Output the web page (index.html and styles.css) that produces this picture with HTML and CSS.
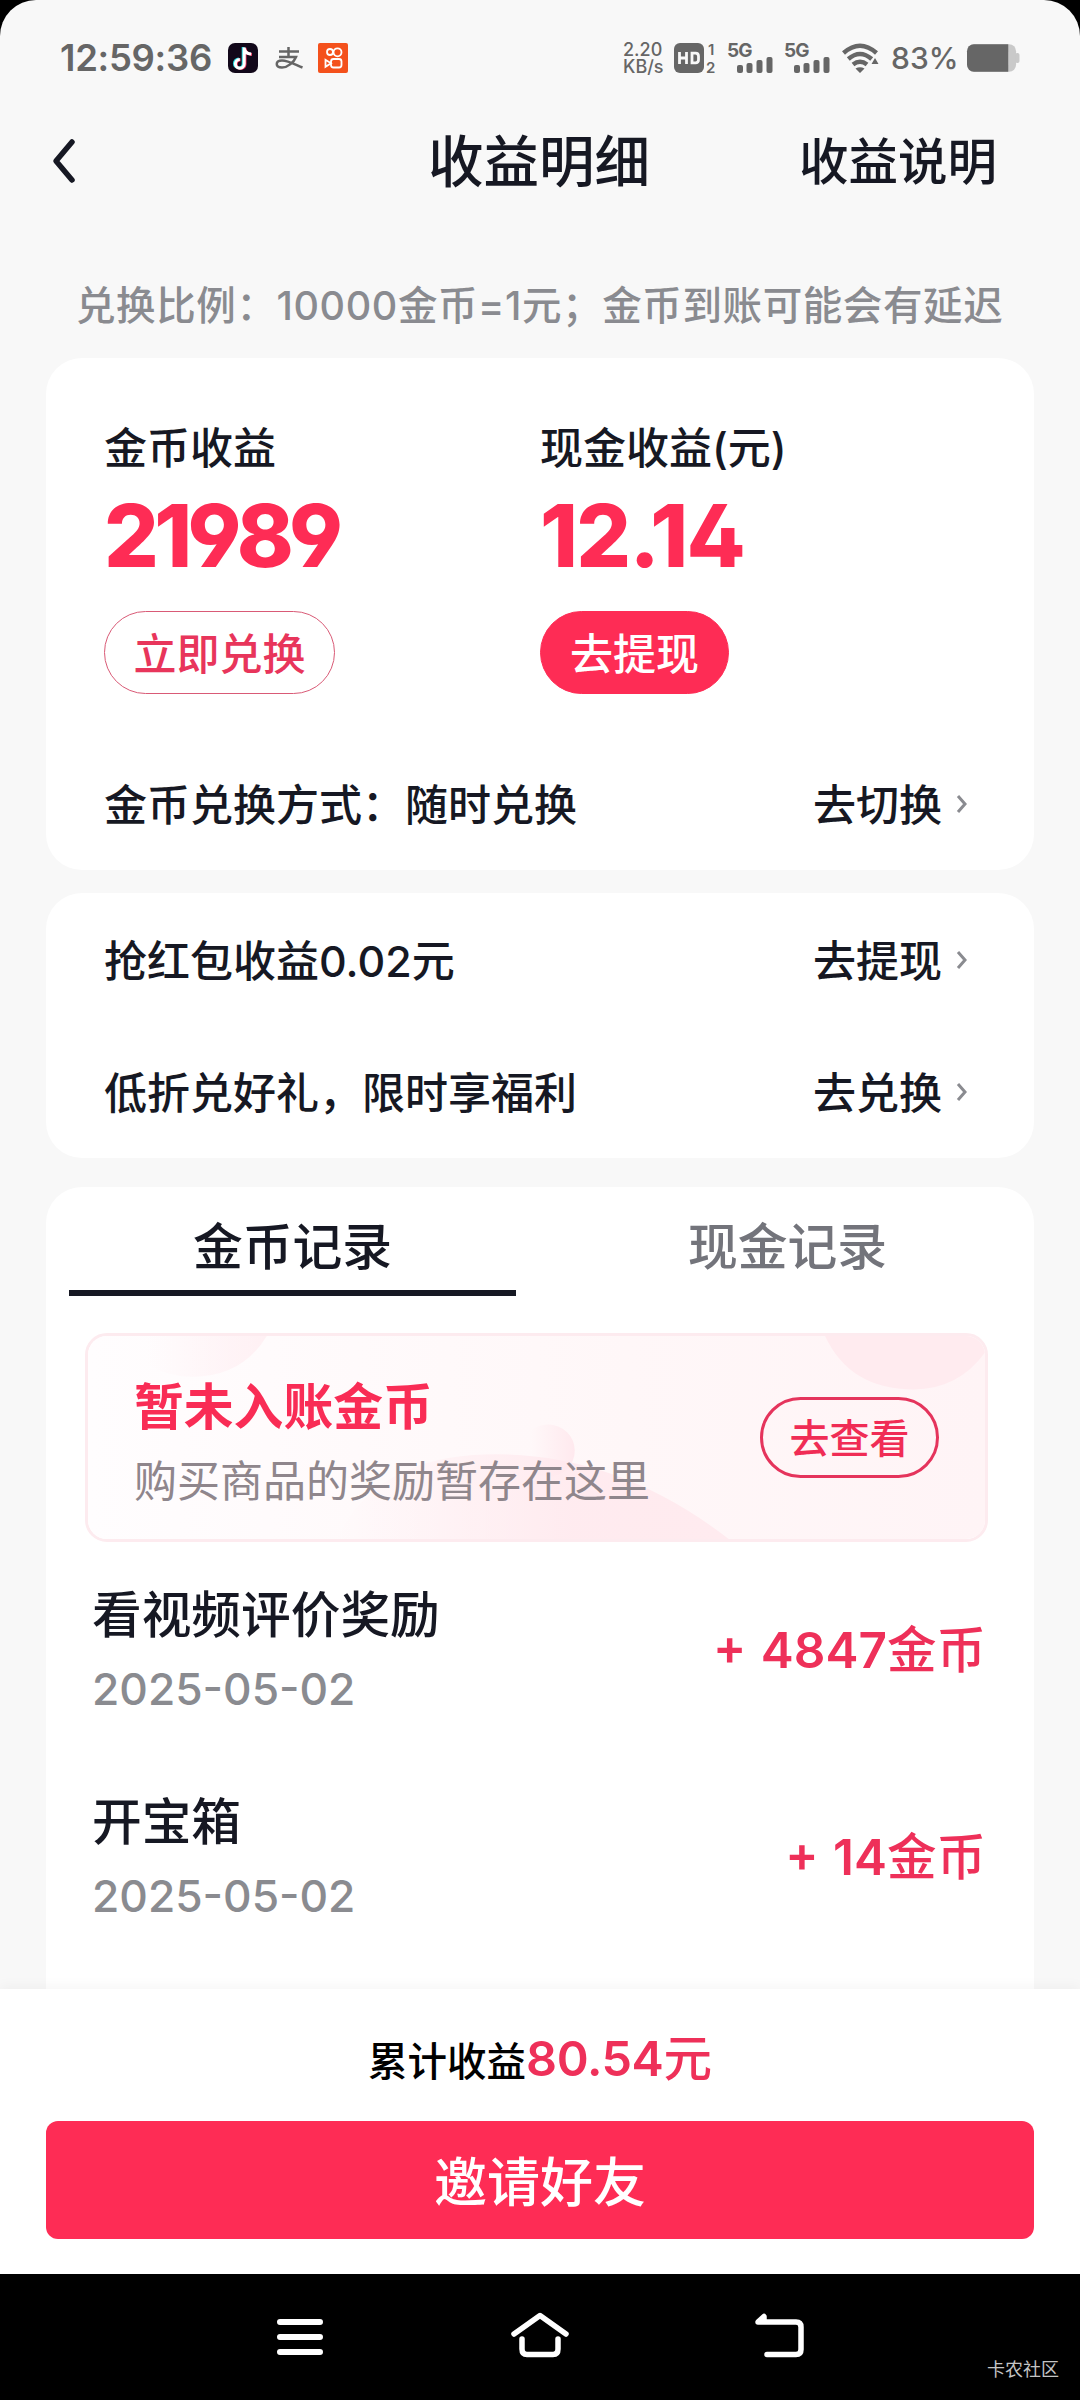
FILE: index.html
```html
<!DOCTYPE html>
<html lang="zh-CN">
<head>
<meta charset="utf-8">
<title>收益明细</title>
<link rel="stylesheet" href="styles.css">
</head>
<body>
<div class="screen">
  <div class="statusbar">
    <span class="clock">12:59:36</span>
    <svg class="app-icon" viewBox="0 0 30 30">
      <rect width="30" height="30" rx="7" fill="#12081a"/>
      <g fill="none" stroke-width="3">
        <path d="M15.200 4v16.400a4.400 4.400 0 1 1-4.400-4.400M15.200 5c.7 3.500 3 5.500 7 5.700" stroke="#25d9e0"/>
        <path d="M17 4.800v16.400a4.400 4.400 0 1 1-4.400-4.400M17 5.800c.7 3.500 3 5.500 7 5.700" stroke="#f0335f"/>
        <path d="M16.200 4.400v16.400a4.400 4.400 0 1 1-4.400-4.400M16.200 5.400c.7 3.500 3 5.500 7 5.700" stroke="#fff"/>
      </g>
    </svg>
    <svg class="pay-icon" viewBox="0 0 28 22" fill="none" stroke="#666" stroke-width="2.500">
      <path d="M4 4.500h20M13.500 0v9.500M4 10h17c-2 5-8 10.500-14 10.500-7 0-7-7 0-7 6 0 13 4 20.500 7"/>
    </svg>
    <svg class="app-icon" viewBox="0 0 30 30">
      <rect width="30" height="30" rx="2" fill="#f4511c"/>
      <g fill="none" stroke="#fff" stroke-width="1.800">
        <circle cx="12" cy="9" r="3"/><circle cx="19.500" cy="9.300" r="4"/>
        <rect x="13" y="16" width="10.500" height="8.500" rx="2.500"/><path d="M13 20.300l-5.500-3.500v7z"/>
      </g>
    </svg>
    <div class="status-right">
      <div class="speed"><span>2.20</span><span>KB/s</span></div>
      <svg class="hd" viewBox="0 0 43 30" fill="#666">
        <rect width="30" height="30" rx="6"/>
        <path d="M5.500 9v12M12.500 9v12M5.500 15h7M18 10.200h3.500q3 0 3 3v3.600q0 3-3 3H18z" fill="none" stroke="#f8f8f8" stroke-width="2.800"/>
        <text x="34" y="11.500" class="tiny">1</text><text x="32" y="30" class="tiny">2</text>
      </svg>
      <svg class="signal" viewBox="0 0 45 30" fill="#666">
        <text x="-1" y="14" class="net">5G</text>
        <rect x="9" y="22" width="6" height="8" rx="2"/><rect x="18.500" y="20" width="6" height="10" rx="2"/><rect x="28.500" y="17" width="6" height="13" rx="2"/><rect x="38.500" y="14" width="6" height="16" rx="2"/>
      </svg>
      <svg class="signal second" viewBox="0 0 45 30" fill="#666">
        <text x="-1" y="14" class="net">5G</text>
        <rect x="9" y="22" width="6" height="8" rx="2"/><rect x="18.500" y="20" width="6" height="10" rx="2"/><rect x="28.500" y="17" width="6" height="13" rx="2"/><rect x="38.500" y="14" width="6" height="16" rx="2"/>
      </svg>
      <svg class="wifi" viewBox="0 0 37 30" fill="none" stroke="#666" stroke-width="4.500">
        <path d="M1.500 10Q18 -4.500 34.500 10M6.300 16Q18 6 29.700 16M11 21.500Q18 16 25 21.500"/>
        <path d="M13.500 25.500q4.500-2.500 9 0L18 30zM29.500 21h7l-3.500-6z" fill="#666" stroke="none"/>
      </svg>
      <span class="percent">83%</span>
      <svg class="battery" viewBox="0 0 54 28">
        <rect width="50" height="28" rx="7" fill="#c9c9c9"/><rect x="49" y="9" width="4.500" height="10" rx="2" fill="#c9c9c9"/>
        <path d="M7 0h35v28H7a7 7 0 0 1-7-7V7a7 7 0 0 1 7-7z" fill="#666"/>
      </svg>
    </div>
  </div>

  <header class="navbar">
    <svg class="back" viewBox="0 0 24 48" fill="none" stroke="#161823" stroke-width="5.500" stroke-linecap="round" stroke-linejoin="round"><path d="M20 4L4 23l16 19"/></svg>
    <h1 class="title">收益明细</h1>
    <span class="help">收益说明</span>
  </header>

  <p class="notice">兑换比例：10000金币=1元；金币到账可能会有延迟</p>

  <section class="card income">
    <div class="totals">
      <div class="total"><span class="label">金币收益</span><strong class="amount coins">21989</strong><span class="pill">立即兑换</span></div>
      <div class="total"><span class="label">现金收益(元)</span><strong class="amount">12.14</strong><span class="pill filled">去提现</span></div>
    </div>
    <div class="row"><span>金币兑换方式：随时兑换</span><span class="link">去切换<svg class="chevron" viewBox="0 0 12 20"><path d="M2 2l7 8-7 8"/></svg></span></div>
  </section>

  <section class="card extras">
    <div class="row"><span>抢红包收益0.02元</span><span class="link">去提现<svg class="chevron" viewBox="0 0 12 20"><path d="M2 2l7 8-7 8"/></svg></span></div>
    <div class="row"><span>低折兑好礼，限时享福利</span><span class="link">去兑换<svg class="chevron" viewBox="0 0 12 20"><path d="M2 2l7 8-7 8"/></svg></span></div>
  </section>

  <section class="card records">
    <div class="tabs"><span class="tab active">金币记录</span><span class="tab">现金记录</span></div>
    <div class="banner">
      <svg class="banner-art" viewBox="0 0 903 209" preserveAspectRatio="none">
        <defs>
          <linearGradient id="base"><stop offset="0" stop-color="#fffdfe"/><stop offset=".6" stop-color="#fff7f8"/><stop offset="1" stop-color="#fff4f6"/></linearGradient>
          <linearGradient id="hill"><stop offset="0" stop-color="#ffe8ed" stop-opacity="0"/><stop offset=".6" stop-color="#ffe8ed" stop-opacity=".8"/><stop offset="1" stop-color="#ffebef"/></linearGradient>
          <linearGradient id="ball"><stop offset=".2" stop-color="#ffe9ee" stop-opacity="0"/><stop offset="1" stop-color="#ffe9ee"/></linearGradient>
        </defs>
        <rect width="903" height="209" fill="url(#base)"/>
        <path d="M30 0q30 42 75 42 50 0 75-42z" fill="url(#ball)" opacity=".6"/>
        <circle cx="463" cy="118" r="27" fill="url(#ball)"/>
        <path d="M250 209Q290 125 400 122 530 118 645 209z" fill="url(#hill)"/>
        <path d="M742 0q25 55 89 55 45 0 72-38V0z" fill="#ffebef"/>
      </svg>
      <div class="banner-text"><strong>暂未入账金币</strong><span>购买商品的奖励暂存在这里</span></div>
      <span class="banner-btn">去查看</span>
    </div>
    <div class="record"><div class="what"><span class="name">看视频评价奖励</span><span class="date">2025-05-02</span></div><span class="gain"><b>+ 4847</b>金币</span></div>
    <div class="record"><div class="what"><span class="name">开宝箱</span><span class="date">2025-05-02</span></div><span class="gain"><b>+ 14</b>金币</span></div>
  </section>

  <footer class="footer">
    <div class="sum">累计收益<span><b>80.54</b>元</span></div>
    <div class="invite">邀请好友</div>
  </footer>
</div>

<nav class="sysnav">
  <svg viewBox="0 0 60 48" stroke="#fff" stroke-width="6" stroke-linecap="round" fill="none"><path d="M10 12h40M10 27h40M10 42h40"/></svg>
  <svg viewBox="0 0 60 48" stroke="#fff" stroke-width="5.500" stroke-linecap="round" stroke-linejoin="round" fill="none"><path d="M4 24L30 5.500 56 24M12 29v10q0 5.500 5 5.500h26q5 0 5-5.500V29"/></svg>
  <svg viewBox="0 0 60 48" stroke="#fff" stroke-width="5.500" stroke-linecap="round" stroke-linejoin="round" fill="none"><path d="M17 44.500h29q5 0 5-5V17q0-5-5-5H8l6-5.500V12"/></svg>
  <span class="watermark">卡农社区</span>
</nav>
</body>
</html>
```
FILE: styles.css
```css
* { box-sizing: border-box; }
body {
  margin: 0;
  width: 1080px;
  height: 2400px;
  overflow: hidden;
  background: #000;
  color: #161823;
  font-family: Inter, "Noto Sans CJK SC", sans-serif;
  font-weight: 500;
  white-space: nowrap;
}
svg { display: block; flex: none; overflow: visible; }
b { font-weight: 600; }

.screen {
  height: 2274px;
  display: flex;
  flex-direction: column;
  background: #f8f8f8;
  border-radius: 36px 36px 0 0;
  overflow: hidden;
}

/* status bar */
.statusbar { height: 116px; flex: none; display: flex; align-items: center; padding: 0 60px 0 60px; color: #666; }
.clock { width: 168px; font-size: 36.500px; line-height: 40px; font-weight: 600; letter-spacing: -.3px; }
.app-icon { width: 30px; height: 30px; }
.pay-icon { width: 28px; height: 22px; margin: 0 15px 0 17px; }
.status-right { display: flex; align-items: center; margin-left: auto; }
.speed { display: flex; flex-direction: column; width: 51px; font-size: 18px; line-height: 17px; }
.hd { width: 43px; height: 30px; margin-right: 11px; }
.tiny { font: 600 15px Inter, sans-serif; }
.net { font: 700 19px Inter, sans-serif; letter-spacing: -1px; }
.signal { width: 45px; height: 30px; }
.signal.second { margin: 0 12px; }
.wifi { width: 37px; height: 30px; }
.percent { width: 76px; margin-left: 12px; font-size: 30px; }
.battery { width: 53px; height: 28px; }

/* title bar */
.navbar { height: 92px; flex: none; display: grid; grid-template-columns: 376px 222px 1fr; align-items: center; padding: 0 83px 0 52px; }
.back { width: 24px; height: 48px; }
.title { margin: 0; font-size: 55.500px; line-height: 80px; font-weight: 500; text-align: center; }
.help { font-size: 49.500px; line-height: 80px; text-align: right; }

.notice { flex: none; margin: 69px 0 0; padding-left: 76px; height: 81px; font-size: 39.500px; line-height: 58px; letter-spacing: .6px; color: #8a8b90; }

/* cards */
.card { flex: none; margin: 0 46px; border-radius: 36px; background: #fff; }
.income { height: 512px; padding: 60px 58px 0; }
.totals { display: grid; grid-template-columns: 436px 1fr; }
.total { display: flex; flex-direction: column; align-items: flex-start; }
.label { font-size: 43px; line-height: 60px; }
.amount { margin-top: 12px; font-size: 86px; line-height: 92px; font-weight: 800; color: #fe2c55; letter-spacing: -1.700px; font-feature-settings: "ss01"; }
.amount.coins { letter-spacing: -4.700px; }
.pill { margin-top: 29px; height: 83px; padding: 0 28.500px; border: 1.500px solid #d95a76; border-radius: 42px; font-size: 43px; line-height: 84px; color: #e8355b; }
.pill.filled { padding: 0 29px; border-color: #fe2c55; background: #fe2c55; color: #fff; }
.row { display: flex; justify-content: space-between; font-size: 43px; line-height: 60px; padding-right: 8px; }
.income .row { margin-top: 81px; }
.link { display: flex; align-items: center; gap: 14px; }
.chevron { width: 12px; height: 20px; fill: none; stroke: #8a8b90; stroke-width: 3; margin-bottom: 3px; }
.extras { height: 265px; margin-top: 23px; padding: 38px 58px 0; }
.extras .row + .row { margin-top: 72px; }
.records { height: 900px; margin-top: 29px; }

.tabs { display: flex; gap: 48px; padding: 0 23px; }
.tab { width: 447px; height: 109px; padding-top: 25px; text-align: center; font-size: 49.800px; line-height: 70px; color: #73747b; }
.tab.active { color: #161823; border-bottom: 6px solid #161823; }

.banner { position: relative; display: flex; align-items: center; justify-content: space-between; margin: 37px 46px 0 39px; height: 209px; padding: 0 46px; border: 3px solid #fdebef; border-radius: 22px; overflow: hidden; }
.banner-art { position: absolute; inset: 0; width: 100%; height: 100%; }
.banner-text { position: relative; display: flex; flex-direction: column; padding-top: 10px; }
.banner-text strong { font-size: 49.800px; line-height: 76px; font-weight: 700; color: #f92c55; }
.banner-text span { font-size: 43px; line-height: 72px; font-weight: 400; color: #8f868c; }
.banner-btn { position: relative; width: 179px; height: 81px; border: 3px solid #e5345c; border-radius: 41px; text-align: center; font-size: 40px; line-height: 78px; color: #f02c55; }

.record { display: flex; align-items: center; justify-content: space-between; margin: 0 48px 0 46px; height: 207px; padding-top: 9px; }
.what { display: flex; flex-direction: column; padding-top: 2px; }
.name { font-size: 49.700px; line-height: 76px; }
.date { font-size: 44.300px; line-height: 72px; color: #8a8b90; }
.gain { font-size: 49.500px; line-height: 70px; color: #ee3059; word-spacing: 2px; }

/* bottom action area */
.footer { position: absolute; top: 1989px; left: 0; width: 1080px; height: 285px; padding: 35px 46px 0; background: #fff; box-shadow: 0 -3px 12px rgba(0, 0, 0, .04); }
.sum { height: 97px; text-align: center; font-size: 39.500px; line-height: 70px; color: #000; }
.sum span { font-size: 48.500px; color: #ee3059; }
.sum b { letter-spacing: -.4px; }
.invite { height: 118px; border-radius: 12px; background: #fe2c55; color: #fff; text-align: center; font-size: 53px; line-height: 124px; }

/* system navigation */
.sysnav { position: relative; height: 126px; display: flex; justify-content: center; gap: 180px; padding-top: 36px; }
.sysnav svg { width: 60px; height: 48px; }
.watermark { position: absolute; right: 21px; bottom: 17px; font-size: 18px; line-height: 26px; font-weight: 400; color: #c4c4c4; }
```
